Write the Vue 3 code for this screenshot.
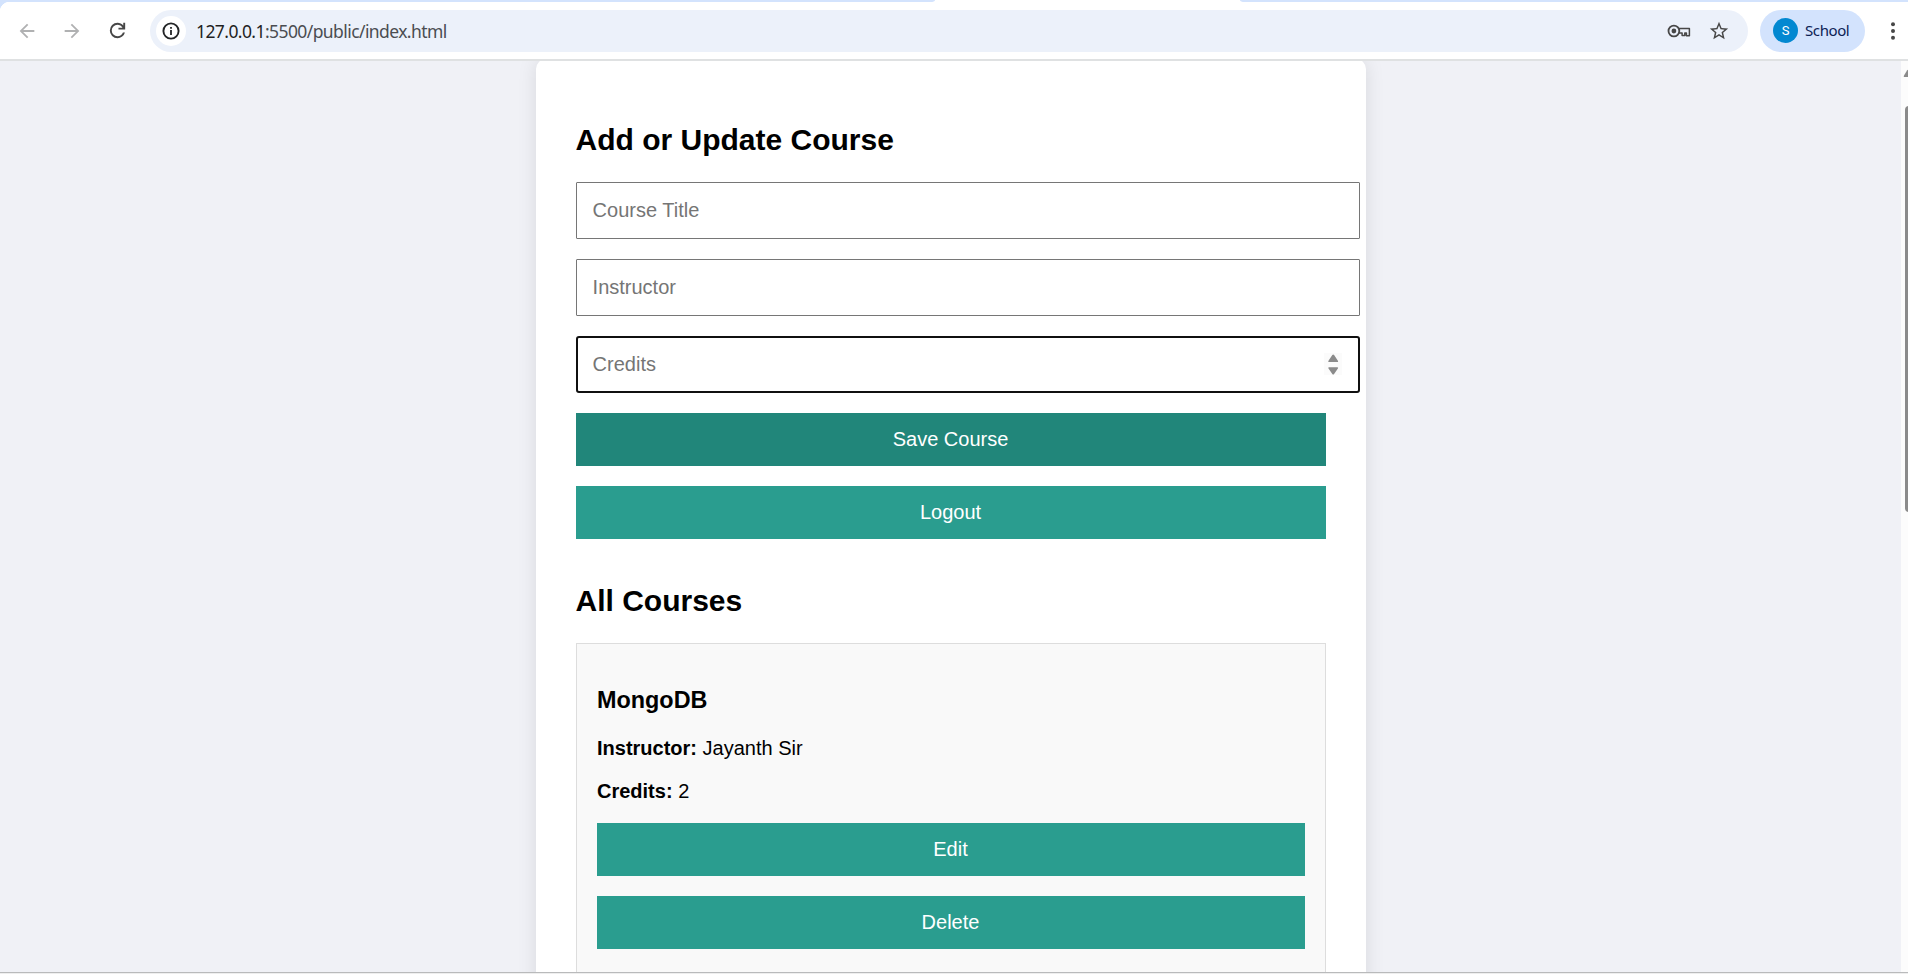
<script setup>
const fields = [
  { placeholder: 'Course Title', type: 'text', active: false },
  { placeholder: 'Instructor', type: 'text', active: false },
  { placeholder: 'Credits', type: 'text', active: true },
]
const courses = [{ title: 'MongoDB', instructor: 'Jayanth Sir', credits: 2 }]
</script>

<template>
  <div class="window">
    <div class="tabs"><i class="tab-left"></i><i class="tab-right"></i></div>
    <header class="toolbar">
      <nav class="nav">
        <svg class="dim" width="22" height="22" viewBox="0 0 24 24"><path d="M20 11H7.83l5.59-5.59L12 4l-8 8 8 8 1.41-1.41L7.83 13H20z" /></svg>
        <svg class="dim" width="22" height="22" viewBox="0 0 24 24"><path d="M4 13h12.17l-5.59 5.59L12 20l8-8-8-8-1.41 1.41L16.17 11H4z" /></svg>
        <svg width="23" height="23" viewBox="0 0 24 24"><path d="M12 20q-3.35 0-5.675-2.325T4 12q0-3.35 2.325-5.675T12 4q1.725 0 3.3.713T18 6.75V4h2v7h-7V9h4.2q-.8-1.4-2.187-2.2T12 6Q9.5 6 7.75 7.75T6 12q0 2.5 1.75 4.25T12 18q1.925 0 3.475-1.1T17.65 14h2.1q-.7 2.65-2.85 4.325T12 20" /></svg>
      </nav>
      <div class="address">
        <span class="info">
          <svg width="20" height="20" viewBox="0 0 20 20">
            <circle cx="10" cy="10" r="7.6" fill="none" stroke="#222426" stroke-width="1.9" />
            <path d="M9.1 9h1.8v5H9.1zM9.1 6h1.8v1.8H9.1z" fill="#222426" />
          </svg>
        </span>
        <span class="url"><b>127.0.0.1</b>:5500/public/index.html</span>
        <svg class="key" width="24" height="16" viewBox="0 0 24 16">
          <path d="M11.4 5.4h11v7.300h-3V10h-1.600v2.500h-2.700V10h-3.500" fill="none" stroke="#474747" stroke-width="1.5" stroke-linejoin="round" />
          <circle cx="6.9" cy="8" r="5.4" fill="none" stroke="#474747" stroke-width="1.8" />
          <circle cx="6.9" cy="8" r="2.4" fill="#474747" />
        </svg>
        <svg class="star" width="22" height="22" viewBox="0 0 24 24"><path d="M22 9.24l-7.19-.62L12 2 9.19 8.63 2 9.24l5.46 4.73L5.82 21 12 17.27 18.18 21l-1.63-7.03zM12 15.4l-3.76 2.27 1-4.28-3.32-2.88 4.38-.38L12 6.1l1.71 4.04 4.38.38-3.32 2.88 1 4.28z" /></svg>
      </div>
      <div class="profile"><span class="avatar">S</span><span class="name">School</span></div>
      <svg class="menu" width="6" height="20" viewBox="0 0 6 20"><circle cx="3" cy="3.2" r="2" /><circle cx="3" cy="10" r="2" /><circle cx="3" cy="16.8" r="2" /></svg>
    </header>

    <div class="viewport">
      <div class="page">
        <main class="card">
          <h2>Add or Update Course</h2>
          <form @submit.prevent>
            <div v-for="f in fields" :key="f.placeholder" class="field" :class="{ active: f.active }">
              <input :type="f.type" :placeholder="f.placeholder" />
              <svg v-if="f.active" class="spinner" width="18" height="22" viewBox="0 0 18 22">
                <path d="M4.500 7.700 8.300 2q.9-1.200 1.800 0l3.800 5.700q.7 1.200-.6 1.200H5.100q-1.300 0-.6-1.200zM4.500 15.400 8.300 21q.9 1.200 1.800 0l3.800-5.600q.7-1.200-.6-1.200H5.100q-1.300 0-.6 1.200z" fill="#8b8b8b" />
              </svg>
            </div>
            <button type="submit" class="hovered">Save Course</button>
          </form>
          <button type="button">Logout</button>
          <h2 class="list-title">All Courses</h2>
          <section v-for="c in courses" :key="c.title" class="course">
            <h3>{{ c.title }}</h3>
            <p><strong>Instructor:</strong> {{ c.instructor }}</p>
            <p><strong>Credits:</strong> {{ c.credits }}</p>
            <button type="button">Edit</button>
            <button type="button">Delete</button>
          </section>
        </main>
      </div>
      <aside class="scrollbar">
        <svg width="7" height="8" viewBox="0 0 7 8"><path d="M3 6.500 6 1.500Q7 .2 8 1.500V8H3.500Q2.300 8 3 6.500z" fill="#8b8b8b" /></svg>
        <div class="thumb"></div>
      </aside>
    </div>
    <div class="bottom"></div>
  </div>
</template>

<style>
body {
  margin: 0;
  overflow: hidden;
}
</style>

<style scoped>
.window {
  width: 1908px;
  height: 974px;
  display: flex;
  flex-direction: column;
  overflow: hidden;
  background: #fff;
  font-family: "Liberation Sans", Arial, sans-serif;
}
.tabs {
  height: 2px;
  flex: none;
  display: flex;
  justify-content: space-between;
  background: #fff;
}
.tabs i {
  background: #d3e3fd;
}
.tab-left {
  width: 935px;
  border-bottom-right-radius: 5px 2px;
}
.tab-right {
  width: 668px;
  border-bottom-left-radius: 5px 2px;
}
.toolbar {
  height: 57px;
  flex: none;
  display: flex;
  align-items: center;
  border-bottom: 2px solid #dfe1e2;
  background: radial-gradient(circle at 10px 10px, #fff 10px, #d3e3fd 10.7px) 0 0 / 10px 10px no-repeat #fff;
}
.toolbar svg {
  fill: #474747;
  flex: none;
}
.nav {
  width: 150px;
  box-sizing: border-box;
  padding-left: 16px;
  display: flex;
  align-items: center;
  gap: 23px;
  flex: none;
}
.nav .dim {
  fill: #b0b1b2;
}
.address {
  width: 1598px;
  height: 42px;
  margin-top: 1px;
  box-sizing: border-box;
  padding: 0 18px 0 6px;
  display: flex;
  align-items: center;
  border-radius: 21px;
  background: #ecf1fa;
}
.info {
  width: 30px;
  height: 30px;
  display: flex;
  align-items: center;
  justify-content: center;
  border-radius: 50%;
  background: #fff;
}
.url {
  flex: 1;
  margin-left: 10px;
  font: 17.5px/24px "Noto Sans", sans-serif;
  letter-spacing: -0.58px;
  color: #4a4d51;
}
.url b {
  font-weight: 400;
  color: #1f1f1f;
}
.key {
  margin-right: 17px;
}
.profile {
  width: 105px;
  height: 42px;
  margin-left: 12px;
  box-sizing: border-box;
  padding-left: 13px;
  display: flex;
  align-items: center;
  gap: 7px;
  border-radius: 21px;
  background: #d3e3fd;
  color: #0b2255;
  font: 15px/20px "Noto Sans", sans-serif;
}
.name {
  letter-spacing: -0.4px;
  margin-top: -1px;
}
.avatar {
  width: 25px;
  height: 25px;
  border-radius: 50%;
  background: #0288d1;
  color: #fff;
  font: 13px/25px Roboto, sans-serif;
  text-align: center;
}
.menu {
  margin-left: 24.5px;
}
.viewport {
  flex: 1;
  min-height: 0;
  display: flex;
  overflow: hidden;
}
.page {
  flex: 1;
  display: flex;
  justify-content: center;
  align-items: flex-start;
  background: #f0f1f6;
  overflow: hidden;
}
.card {
  width: 830px;
  height: 1200px;
  box-sizing: border-box;
  margin-top: -2px;
  margin-left: 1px;
  padding: 64px 40px 0;
  border-radius: 10px;
  background: #fff;
  box-shadow: 0 0 19px rgba(0, 0, 0, 0.1);
}
h2 {
  margin: 0;
  height: 59px;
  font-size: 30px;
  line-height: 34px;
  text-indent: -0.5px;
}
.field {
  position: relative;
  width: 784px;
  height: 57px;
  box-sizing: border-box;
  margin-bottom: 20px;
  border: 1px solid #767676;
  border-radius: 1px;
}
.field.active {
  border: 2px solid #101010;
  border-radius: 3px;
}
input {
  display: block;
  width: 100%;
  height: 100%;
  box-sizing: border-box;
  padding: 0 15.6px;
  border: 0;
  outline: 0;
  background: transparent;
  font: 20px "Liberation Sans", Arial, sans-serif;
}
.active input {
  padding: 0 14.6px;
}
input::placeholder {
  color: #757575;
  opacity: 1;
}
.spinner {
  position: absolute;
  right: 16px;
  top: 15px;
  background: #fbfbfb;
}
button {
  display: block;
  width: 100%;
  height: 53px;
  margin: 0 0 20px;
  padding: 0 1px 0 0;
  border: 0;
  background: #2a9d8f;
  color: #fff;
  font: 20px/53px "Liberation Sans", Arial, sans-serif;
}
.hovered {
  background: #21867a;
}
.list-title {
  padding-top: 25px;
}
.course {
  height: 600px;
  box-sizing: border-box;
  border: 1px solid #ddd;
  padding: 43px 20px 0;
  background: #f9f9f9;
}
h3 {
  margin: 0 0 24px;
  font-size: 23.4px;
  line-height: 26px;
}
p {
  margin: 0 0 20px;
  font-size: 20px;
  line-height: 23px;
}
.scrollbar {
  width: 7px;
  flex: none;
  background: #fcfcfc;
  padding-top: 8px;
}
.scrollbar svg {
  display: block;
}
.thumb {
  width: 10px;
  height: 406px;
  margin: 29px 0 0 4px;
  border-radius: 4px;
  background: #8b8b8b;
}
.bottom {
  height: 1px;
  flex: none;
  border-top: 1px solid #b9babb;
  background: #eee;
}
</style>
